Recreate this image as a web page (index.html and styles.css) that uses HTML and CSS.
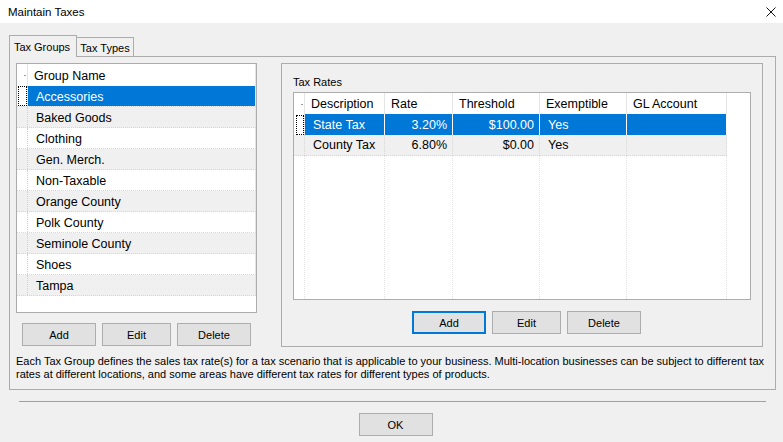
FILE: index.html
```html
<!DOCTYPE html>
<html lang="en">
<head>
  <meta charset="UTF-8" />
  <title>Maintain Taxes</title>
  <link rel="stylesheet" href="styles.css">
</head>
<body>
<div class="window">

  <div class="titlebar">
    <span>Maintain Taxes</span>
    <svg class="close" width="10" height="10" viewBox="0 0 10 10">
      <path d="M0.5 0.5 L9.5 9.5 M9.5 0.5 L0.5 9.5" stroke="#111" stroke-width="1" fill="none"/>
    </svg>
  </div>

  <div class="content">
    <div class="tabs">
      <div class="tab active">Tax Groups</div>
      <div class="tab">Tax Types</div>
    </div>

    <div class="tabpanel">
      <div class="panel-row">

        <!-- Tax groups list -->
        <div class="groups-col">
          <div class="list">
            <div class="lrow head"><div class="sel"><span class="sort"></span></div><div class="name">Group Name</div></div>
            <div class="lrow selected"><div class="sel"><span class="focus"></span></div><div class="name">Accessories</div></div>
            <div class="lrow alt"><div class="sel"></div><div class="name">Baked Goods</div></div>
            <div class="lrow"><div class="sel"></div><div class="name">Clothing</div></div>
            <div class="lrow alt"><div class="sel"></div><div class="name">Gen. Merch.</div></div>
            <div class="lrow"><div class="sel"></div><div class="name">Non-Taxable</div></div>
            <div class="lrow alt"><div class="sel"></div><div class="name">Orange County</div></div>
            <div class="lrow"><div class="sel"></div><div class="name">Polk County</div></div>
            <div class="lrow alt"><div class="sel"></div><div class="name">Seminole County</div></div>
            <div class="lrow"><div class="sel"></div><div class="name">Shoes</div></div>
            <div class="lrow alt"><div class="sel"></div><div class="name">Tampa</div></div>
          </div>
          <div class="btn-row left-btns">
            <button class="btn wide">Add</button>
            <button class="btn">Edit</button>
            <button class="btn wide">Delete</button>
          </div>
        </div>

        <!-- Tax rates -->
        <div class="rates-box">
          <div class="rates-label">Tax Rates</div>
          <div class="grid">
            <div class="gc hd sel"><span class="sort"></span></div>
            <div class="gc hd">Description</div>
            <div class="gc hd">Rate</div>
            <div class="gc hd">Threshold</div>
            <div class="gc hd">Exemptible</div>
            <div class="gc hd">GL Account</div>
            <div class="gc hd last"></div>

            <div class="gc sel row-sel"><span class="focus"></span></div>
            <div class="gc on">State Tax</div>
            <div class="gc on num">3.20%</div>
            <div class="gc on num">$100.00</div>
            <div class="gc on">Yes</div>
            <div class="gc on"></div>
            <div class="gc last"></div>

            <div class="gc sel alt"></div>
            <div class="gc alt">County Tax</div>
            <div class="gc alt num">6.80%</div>
            <div class="gc alt num">$0.00</div>
            <div class="gc alt">Yes</div>
            <div class="gc alt"></div>
            <div class="gc last"></div>

            <div class="gc fill"></div>
            <div class="gc fill"></div>
            <div class="gc fill"></div>
            <div class="gc fill"></div>
            <div class="gc fill"></div>
            <div class="gc fill"></div>
            <div class="gc last"></div>
          </div>
          <div class="btn-row right-btns">
            <button class="btn wide default">Add</button>
            <button class="btn">Edit</button>
            <button class="btn wide">Delete</button>
          </div>
        </div>

      </div>

      <p class="note">Each Tax Group defines the sales tax rate(s) for a tax scenario that is applicable to your business. Multi-location businesses can be subject to different tax<br>rates at different locations, and some areas have different tax rates for different types of products.</p>
    </div>

    <div class="separator"></div>

    <div class="footer">
      <button class="btn wide">OK</button>
    </div>
  </div>

</div>
</body>
</html>
```

FILE: styles.css
```css
body {
  margin: 0;
  background-color: #f0f0f0;
  font-family: "Liberation Sans", Arial, sans-serif;
  font-size: 11px;
  color: #000000;
}
.window {
  width: 783px;
  height: 442px;
  display: flex;
  flex-direction: column;
}
.titlebar {
  height: 23px;
  background-color: #ffffff;
  display: flex;
  align-items: center;
  justify-content: space-between;
  padding: 0 7px 0 8px;
  font-size: 11.5px;
}
.close {
  display: block;
  margin-top: 1px;
}

.content {
  padding: 12px 7px 0 9px;
}

/* Tabs */
.tabs {
  display: flex;
  align-items: flex-end;
  height: 21px;
}
.tab {
  box-sizing: border-box;
  height: 19px;
  width: 57px;
  border: 1px solid #acacac;
  border-left: none;
  border-bottom: none;
  display: flex;
  align-items: center;
  justify-content: center;
  padding-top: 1px;
  background-color: #f0f0f0;
}
.tab.active {
  height: 22px;
  width: 68px;
  border-left: 1px solid #acacac;
  margin-bottom: -1px;
  position: relative;
  z-index: 1;
  padding-top: 0;
  padding-right: 2px;
}
.tabpanel {
  box-sizing: border-box;
  height: 334px;
  border: 1px solid #acacac;
  padding: 6px 0 0 6px;
}
.panel-row {
  display: flex;
  align-items: flex-start;
}

/* Group list */
.groups-col {
  width: 241px;
}
.list {
  box-sizing: border-box;
  height: 250px;
  border: 1px solid #acacac;
  background-color: #ffffff;
}
.lrow {
  display: grid;
  grid-template-columns: 11px 1fr;
  height: 21px;
  box-sizing: border-box;
  border-bottom: 1px dotted #d6d6d6;
  font-size: 12.5px;
}
.lrow.head {
  height: 22px;
  border-bottom: none;
}
.lrow .sel {
  border-right: 1px dotted #d0d0d0;
  display: flex;
  align-items: center;
  justify-content: flex-end;
}
.lrow.head .sel {
  border-right: 1px solid #e5e5e5;
}
.lrow .name {
  display: flex;
  align-items: center;
  padding: 1px 0 0 8px;
  border-right: 1px solid #e5e5e5;
}
.lrow.head .name {
  padding-left: 6px;
}
.lrow.alt {
  background-color: #f0f0f0;
}
.lrow.selected .name {
  background-color: #0078d7;
  color: #ffffff;
}
.lrow.selected .sel {
  justify-content: flex-start;
}
.sort {
  display: block;
  width: 2px;
  height: 1px;
  background-color: #9a9a9a;
  margin: 1px 1px 0 0;
}
.focus {
  display: block;
  box-sizing: border-box;
  width: 9px;
  height: 20px;
  margin-left: 1px;
  border: 1px dotted #000000;
}

/* Buttons */
.btn-row {
  display: flex;
  gap: 6px;
}
.btn {
  box-sizing: border-box;
  height: 23px;
  width: 69px;
  padding: 0;
  background-color: #e1e1e1;
  border: 1px solid #adadad;
  font-family: "Liberation Sans", Arial, sans-serif;
  font-size: 11px;
  color: #000000;
}
.btn.wide {
  width: 74px;
}
.btn.default {
  border: 2px solid #0078d7;
}
.left-btns {
  margin: 10px 0 0 6px;
}

/* Tax rates box */
.rates-box {
  box-sizing: border-box;
  width: 482px;
  height: 284px;
  margin-left: 24px;
  border: 1px solid #acacac;
  padding: 12px 0 0 11px;
}
.rates-label {
  line-height: 12px;
  margin-bottom: 4px;
}
.grid {
  box-sizing: border-box;
  width: 458px;
  height: 208px;
  border: 1px solid #acacac;
  background-color: #ffffff;
  display: grid;
  grid-template-columns: 11px 80px 68px 87px 87px 100px 1fr;
  grid-template-rows: 21px 21px 21px 1fr;
  font-size: 12.5px;
}
.gc {
  box-sizing: border-box;
  display: flex;
  align-items: center;
  padding-left: 8px;
  border-right: 1px dotted #d6d6d6;
  white-space: nowrap;
}
.gc.hd {
  padding-left: 6px;
  border-right: 1px solid #e5e5e5;
}
.gc.sel {
  padding-left: 0;
  justify-content: flex-end;
}
.gc.row-sel {
  justify-content: flex-start;
  padding-left: 1px;
}
.gc.row-sel .focus {
  width: 8px;
}
.gc.num {
  justify-content: flex-end;
  padding-left: 0;
  padding-right: 5px;
}
.gc.on {
  background-color: #0078d7;
  color: #ffffff;
  border-right: 1px solid #ffffff;
}
.gc.alt {
  background-color: #f0f0f0;
  border-bottom: 1px dotted #d6d6d6;
}
.gc.fill {
  border-right: 1px dotted #e2e2e2;
}
.gc.last {
  border-right: none;
}
.right-btns {
  margin: 11px 0 0 119px;
}

.note {
  margin: 8px 0 0 0;
  line-height: 13px;
  white-space: nowrap;
}

.separator {
  height: 1px;
  background-color: #a0a0a0;
  margin: 11px 10px 0 10px;
}
.footer {
  display: flex;
  justify-content: center;
  padding: 11px 0 0 6px;
}
```
